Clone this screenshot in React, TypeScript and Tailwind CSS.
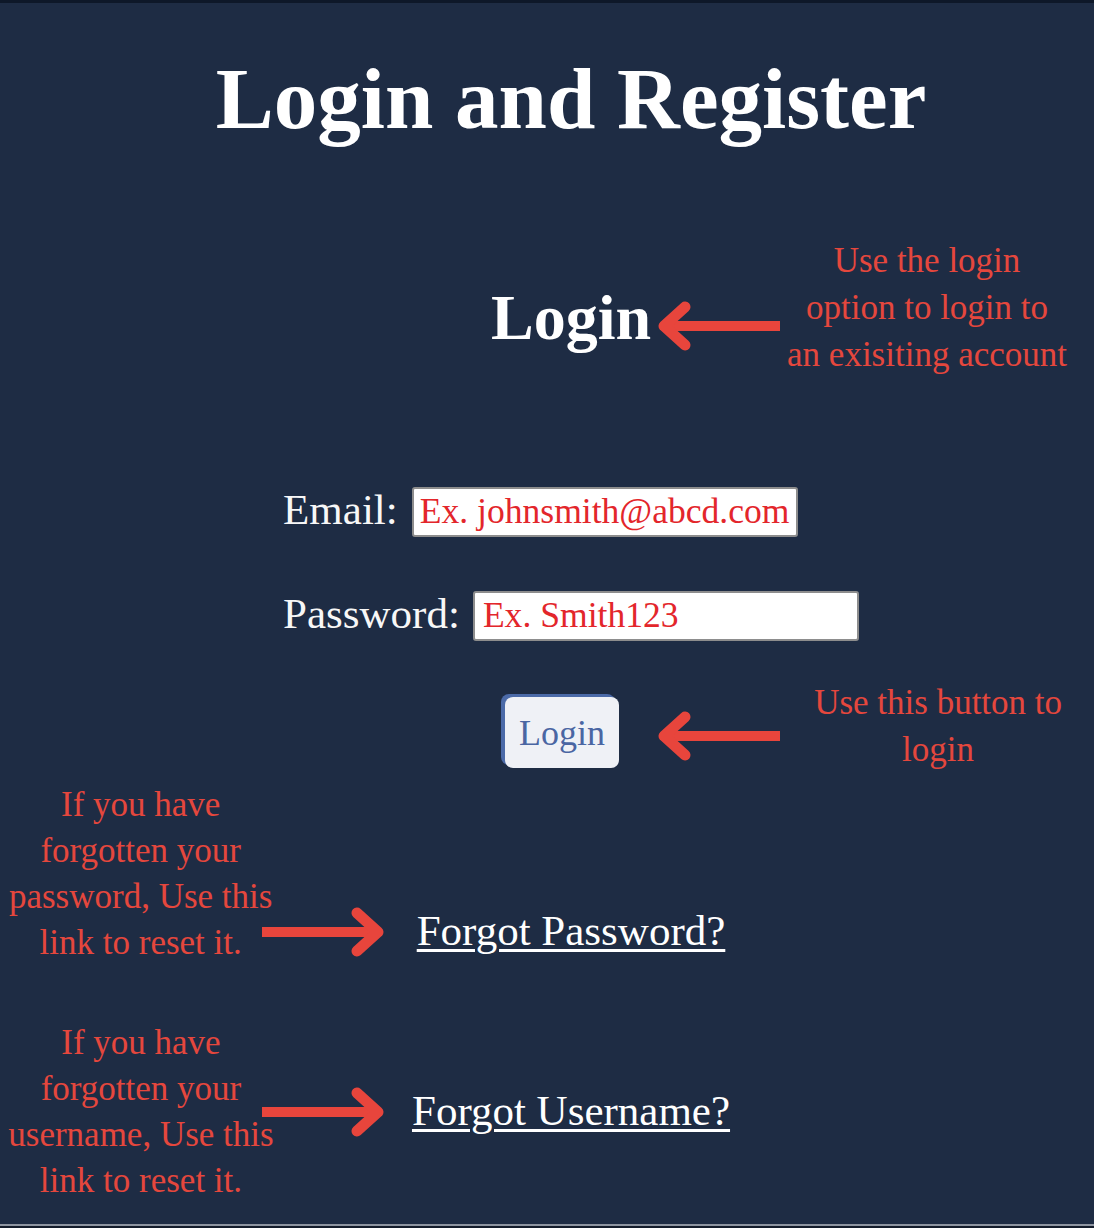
import React from "react";

const RED = "text-[#e5473d]";

function Arrow({ dir }: { dir: "left" | "right" }) {
  // thick red annotation arrow
  return (
    <svg width="122" height="50" viewBox="0 0 122 50" fill="none">
      {dir === "left" ? (
        <>
          <rect x="8" y="20" width="114" height="10" fill="#e8453c" />
          <polyline
            points="27,6 6,25 27,44"
            stroke="#e8453c"
            strokeWidth="11"
            strokeLinecap="round"
            strokeLinejoin="round"
          />
        </>
      ) : (
        <>
          <rect x="0" y="20" width="114" height="10" fill="#e8453c" />
          <polyline
            points="95,6 116,25 95,44"
            stroke="#e8453c"
            strokeWidth="11"
            strokeLinecap="round"
            strokeLinejoin="round"
          />
        </>
      )}
    </svg>
  );
}

export default function App() {
  return (
    <div className="h-[1228px] bg-[#1e2c44] flex flex-col overflow-hidden font-['Liberation_Serif',serif] border-t-[3px] border-[#0e1829]">
      <main className="flex flex-col items-center pl-[48px]">
        <h1 className="mt-[52px] text-[87px] font-bold leading-none text-white">
          Login and Register
        </h1>

        {/* Login heading + note */}
        <div className="relative mt-[144px]">
          <h2 className="text-[64px] font-bold leading-none text-white">Login</h2>
          <div className="absolute left-full top-[15px] ml-[7px]">
            <Arrow dir="left" />
          </div>
          <p
            className={`absolute left-full top-[-49px] ml-[131px] w-[290px] text-center text-[35px] leading-[47px] ${RED}`}
          >
            Use the login
            <br />
            option to login to
            <br />
            an exisiting account
          </p>
        </div>

        {/* Form */}
        <form className="mt-[137px] flex flex-col items-start">
          <div className="flex h-[50px] items-center">
            <label className="pb-[4px] text-[43px] leading-[46px] text-[#f7f7f7]">Email:</label>
            <input
              type="email"
              placeholder="Ex. johnsmith@abcd.com"
              className="ml-[14px] h-[50px] w-[386px] rounded-[3px] border-2 border-[#8d8d8d] bg-white px-[6px] text-[35.6px] text-[#e3262b] outline-none placeholder:text-[#e3262b]"
            />
          </div>
          <div className="mt-[54px] flex h-[50px] items-center">
            <label className="pb-[4px] text-[43px] leading-[46px] text-[#f7f7f7]">Password:</label>
            <input
              type="password"
              placeholder="Ex. Smith123"
              className="ml-[13px] h-[50px] w-[386px] rounded-[3px] border-2 border-[#8d8d8d] bg-white px-[8px] text-[35.6px] text-[#e3262b] outline-none placeholder:text-[#e3262b]"
            />
          </div>

          <div className="relative ml-[222px] mt-[56px]">
            <button
              type="button"
              className="flex h-[71px] w-[114px] items-center justify-center rounded-[8px] bg-[#eff1f6] text-[36px] text-[#4a66a3] shadow-[-4px_-3px_0_#4b6aa8]"
            >
              Login
            </button>
            <div className="absolute left-full top-[14px] ml-[39px]">
              <Arrow dir="left" />
            </div>
            <p
              className={`absolute left-full top-[-18px] ml-[169px] w-[300px] text-center text-[35px] leading-[47px] ${RED}`}
            >
              Use this button to
              <br />
              login
            </p>
          </div>
        </form>

        {/* Forgot password */}
        <div className="relative mt-[141px]">
          <a href="#" className="text-[43px] leading-none text-white underline decoration-[3px] underline-offset-[4px]">
            Forgot Password?
          </a>
          <div className="absolute right-full top-[-2px] mr-[33px]">
            <Arrow dir="right" />
          </div>
          <p
            className={`absolute right-full top-[-127px] mr-[136px] w-[280px] text-center text-[35px] leading-[46px] ${RED}`}
          >
            If you have
            <br />
            forgotten your
            <br />
            password, Use this
            <br />
            link to reset it.
          </p>
        </div>

        {/* Forgot username */}
        <div className="relative mt-[137px]">
          <a href="#" className="text-[43px] leading-none text-white underline decoration-[3px] underline-offset-[4px]">
            Forgot Username?
          </a>
          <div className="absolute right-full top-[-2px] mr-[28px]">
            <Arrow dir="right" />
          </div>
          <p
            className={`absolute right-full top-[-69px] mr-[131px] w-[280px] text-center text-[35px] leading-[46px] ${RED}`}
          >
            If you have
            <br />
            forgotten your
            <br />
            username, Use this
            <br />
            link to reset it.
          </p>
        </div>
      </main>

      <div className="mt-auto h-[2px] bg-[#8e95a1]" />
      <div className="h-[2px] bg-[#141c2b]" />
    </div>
  );
}
